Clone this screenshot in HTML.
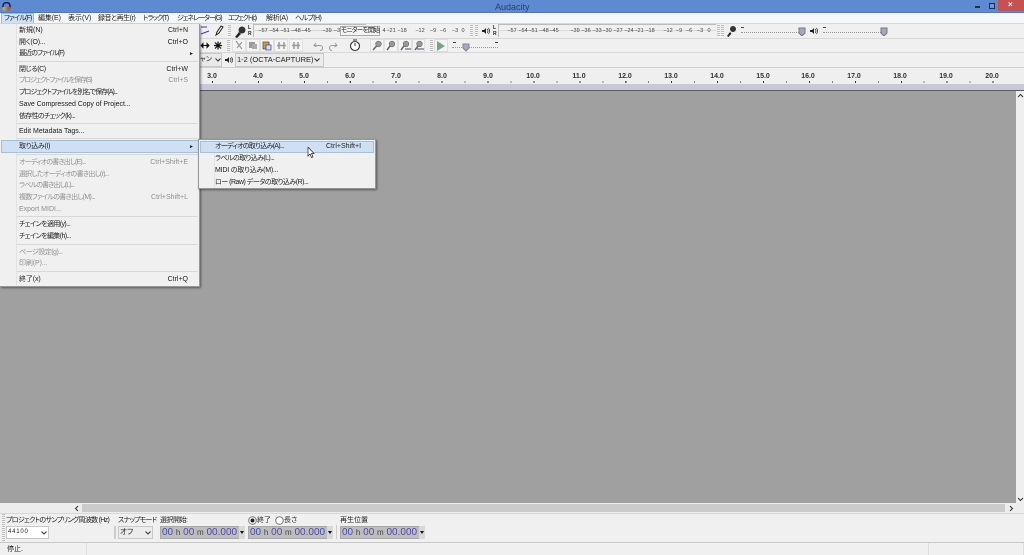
<!DOCTYPE html>
<html><head><meta charset="utf-8"><style>
html,body{margin:0;padding:0;width:1024px;height:555px;overflow:hidden;background:#f0f0f0}
body{position:relative;font-family:"Liberation Sans","Noto Sans CJK JP",sans-serif;font-size:7px;color:#222;line-height:10px;font-feature-settings:"palt"}
div,span.a,svg{position:absolute}
.t{position:absolute;white-space:nowrap;line-height:10px;height:10px}
.d{color:#8f8f8f}
.m{top:14px;font-size:7px}
.s{position:absolute;right:11px;white-space:nowrap}
.mn .t,.mn .s{margin-top:1px}
.sep{position:absolute;left:17px;width:181px;height:1px;background:#d8d8d8}
.rl{position:absolute;top:72px;font-size:7px;font-weight:bold;color:#333;width:30px;text-align:center}
.mt{position:absolute;font-size:5.5px;color:#444;white-space:nowrap;line-height:8px;top:27px;width:12px;text-align:center}
.line{background:#d8d8d8}
.tc{background:#bdbdbd;border:1px solid #a8a8a8;box-sizing:border-box;color:#4a4ab8;font-size:10px;line-height:11px;white-space:nowrap;height:13px;overflow:hidden}
.tc i{font-style:normal;color:#444;font-size:8px}
.grip{width:3px;background:repeating-linear-gradient(#bbb 0 1px,#f5f5f5 1px 2px)}
</style></head><body>
<!-- title -->
<div style="left:0;top:0;width:1024px;height:12px;background:#5e8ad2"></div>
<div style="left:0;top:12px;width:1024px;height:1px;background:#4d7ac6"></div>
<svg style="left:2px;top:2px" width="9" height="9" viewBox="0 0 9 9"><path d="M1 6V4a3.500 3.500 0 0 1 7 0v2" fill="none" stroke="#1a1a50" stroke-width="1.500"/><rect x="0.500" y="5" width="3" height="3.500" fill="#e8a010"/><rect x="5.500" y="5" width="3" height="3.500" fill="#e05010"/></svg>
<div class="t" style="left:495px;top:2px;font-size:9px;color:#2a4270">Audacity</div>
<div style="left:975px;top:6px;width:5px;height:1.500px;background:#1f2f4f"></div>
<div style="left:989px;top:3px;width:4px;height:4px;border:1px solid #1f2f4f;box-sizing:content-box;background:#6f95d6"></div>
<div style="left:998px;top:0;width:26px;height:11px;background:#c75050"></div>
<div class="t" style="left:1008px;top:0px;color:#fff;font-size:8px;font-weight:bold">×</div>
<!-- menu bar -->
<div style="left:0;top:13px;width:1024px;height:11px;background:#f5f6f7"></div>
<div style="left:1px;top:13px;width:33px;height:11px;background:#cde3f7;border:1px solid #8fbfe8;box-sizing:border-box"></div>
<div class="t m" style="left:4px;letter-spacing:-.8px">ファイル(F)</div>
<div class="t m" style="left:38px;letter-spacing:-.1px">編集(E)</div>
<div class="t m" style="left:68px">表示(V)</div>
<div class="t m" style="left:98px;letter-spacing:-.5px">録音と再生(r)</div>
<div class="t m" style="left:143px;letter-spacing:-1px">トラック(T)</div>
<div class="t m" style="left:177px;letter-spacing:-1.1px">ジェネレーター(G)</div>
<div class="t m" style="left:228px;letter-spacing:-1.3px">エフェクト(c)</div>
<div class="t m" style="left:266px;letter-spacing:-.3px">解析(A)</div>
<div class="t m" style="left:295px;letter-spacing:-.6px">ヘルプ(H)</div>
<!-- toolbars -->
<div style="left:0;top:24px;width:1024px;height:44px;background:#f0f0f0"></div>
<div class="line" style="left:0;top:23px;width:1024px;height:1px"></div>
<div class="line" style="left:0;top:38px;width:1024px;height:1px"></div>
<div class="line" style="left:0;top:52px;width:1024px;height:1px"></div>
<div style="left:0;top:67px;width:1024px;height:1px;background:#cfcfcf"></div>
<!-- tools -->
<svg style="left:200px;top:24px" width="30" height="14" viewBox="0 0 30 14"><path d="M1 3h6M1 10l8-3" stroke="#3a3ac0" fill="none"/><path d="M16 11l1-3 4-6 2 1-4 6z" fill="none" stroke="#222"/></svg>
<svg style="left:200px;top:39px" width="26" height="13" viewBox="0 0 26 13"><path d="M1 6.500h8M1 6.500l2-2v4zM9 6.500l-2-2v4z" stroke="#111" fill="#111"/><path d="M18 2.500v8M14 6.500h8M15 3.500l6 6M21 3.500l-6 6" stroke="#111" stroke-width="1.200"/></svg>
<div class="grip" style="left:228px;top:25px;height:12px"></div>
<svg style="left:234px;top:25px" width="14" height="13" viewBox="0 0 14 13"><path d="M1 12l4-5 2 2-4 4z" fill="#222"/><circle cx="8" cy="5" r="3.500" fill="#333"/></svg>
<div class="t" style="left:248px;top:25px;font-size:5px;font-weight:bold;line-height:6px">L<br>R</div>
<!-- rec meter -->
<div style="left:253px;top:24px;width:113px;height:1px;background:#bbb"></div>
<div style="left:253px;top:24px;width:1px;height:13px;background:#bbb"></div>
<div style="left:253px;top:30px;width:86px;height:1px;background:#d4d4d4"></div>
<div class="mt" style="left:257px">−57</div><div class="mt" style="left:268px">−54</div><div class="mt" style="left:279px">−51</div><div class="mt" style="left:290px">−48</div><div class="mt" style="left:300px">−45</div><div class="mt" style="left:321px">−39</div><div class="mt" style="left:331px">−3</div>
<div style="left:340px;top:26px;width:40px;height:10px;background:#f4f4f4;border:1px solid #aaa;box-sizing:border-box"></div>
<div class="t" style="left:341px;top:26px;font-size:6.500px;letter-spacing:-.7px">モニターを開始</div>
<div class="mt" style="left:378px">4</div><div class="mt" style="left:385px">−21</div><div class="mt" style="left:396px">−18</div><div class="mt" style="left:414px">−12</div><div class="mt" style="left:427px">−9</div><div class="mt" style="left:437px">−6</div><div class="mt" style="left:449px">−3</div><div class="mt" style="left:457px">0</div>
<div class="grip" style="left:470px;top:25px;height:12px"></div>
<div class="grip" style="left:475px;top:25px;height:12px"></div>
<svg style="left:482px;top:27px" width="8" height="8" viewBox="0 0 8 8"><path d="M0 3h2l2-2v6L2 5H0z" fill="#222"/><path d="M5 2q2 2 0 4M6.500 1q2 3 0 6" fill="none" stroke="#222" stroke-width=".7"/></svg>
<div class="t" style="left:493px;top:25px;font-size:5px;font-weight:bold;line-height:6px">L<br>R</div>
<div style="left:498px;top:24px;width:218px;height:1px;background:#bbb"></div>
<div style="left:498px;top:24px;width:1px;height:13px;background:#bbb"></div>
<div style="left:498px;top:30px;width:218px;height:1px;background:#dadada"></div>
<div class="mt" style="left:506px">−57</div><div class="mt" style="left:517px">−54</div><div class="mt" style="left:527px">−51</div><div class="mt" style="left:538px">−48</div><div class="mt" style="left:548px">−45</div><div class="mt" style="left:569px">−39</div><div class="mt" style="left:580px">−36</div><div class="mt" style="left:591px">−33</div><div class="mt" style="left:601px">−30</div><div class="mt" style="left:612px">−27</div><div class="mt" style="left:623px">−24</div><div class="mt" style="left:633px">−21</div><div class="mt" style="left:644px">−18</div><div class="mt" style="left:662px">−12</div><div class="mt" style="left:673px">−9</div><div class="mt" style="left:683px">−6</div><div class="mt" style="left:694px">−3</div><div class="mt" style="left:703px">0</div>
<div class="grip" style="left:717px;top:25px;height:12px"></div>
<div class="grip" style="left:721px;top:25px;height:12px"></div>
<svg style="left:726px;top:25px" width="11" height="12" viewBox="0 0 11 12"><path d="M1 11l3-4 1.500 1.500-3 3.500z" fill="#222"/><circle cx="7" cy="4" r="3" fill="#333"/></svg>
<div style="left:741px;top:32px;width:60px;height:0;border-top:1px dotted #999"></div>
<div style="left:741px;top:27px;width:3px;height:1px;background:#444"></div>
<svg style="left:798px;top:25px" width="8" height="11" viewBox="0 0 8 11"><path d="M1 3h6v5l-3 3-3-3z" fill="#a4a8c0" stroke="#777"/></svg>
<svg style="left:810px;top:27px" width="8" height="8" viewBox="0 0 8 8"><path d="M0 3h2l2-2v6L2 5H0z" fill="#222"/><path d="M5 2q2 2 0 4M6.500 1q2 3 0 6" fill="none" stroke="#222" stroke-width=".7"/></svg>
<div style="left:823px;top:32px;width:60px;height:0;border-top:1px dotted #999"></div>
<div style="left:823px;top:27px;width:3px;height:1px;background:#444"></div>
<svg style="left:880px;top:25px" width="8" height="11" viewBox="0 0 8 11"><path d="M1 3h6v5l-3 3-3-3z" fill="#a4a8c0" stroke="#777"/></svg>
<!-- edit toolbar row -->
<div class="grip" style="left:227px;top:40px;height:11px"></div>
<svg style="left:232px;top:39px" width="112" height="13" viewBox="0 0 112 13"><g fill="#f4f4f4" stroke="#e0e0e0"><rect x=".5" y=".5" width="13" height="12"/><rect x="14.500" y=".5" width="13" height="12"/><rect x="28.500" y=".5" width="13" height="12"/><rect x="42.500" y=".5" width="13" height="12"/><rect x="57.500" y=".5" width="13" height="12"/></g><path d="M4 2l6 8M10 3L5 9" stroke="#999" stroke-width="1.200"/><rect x="17" y="3" width="6" height="6" fill="#999"/><rect x="20" y="5" width="5" height="5" fill="#aaa"/><rect x="31" y="3" width="6" height="7" fill="#c9a23c" stroke="#444" stroke-width=".7"/><rect x="34" y="6" width="5" height="5" fill="#dde" stroke="#33a" stroke-width=".7"/><path d="M45 6.500h9M47 3v7M52 3v7" stroke="#999" stroke-width="1.500"/><path d="M60 6.500h8M62 3v7M66 3v7" stroke="#999" stroke-width="1.500"/></svg>
<svg style="left:312px;top:40px" width="28" height="12" viewBox="0 0 28 12"><path d="M4 3L2 5.500 4.500 7M2 5.500h6a2.500 2.500 0 0 1 0 5" fill="none" stroke="#999"/><path d="M23 3l2 2.500L22.500 7M25 5.500h-5a2.500 2.500 0 0 0 0 5" fill="none" stroke="#999"/></svg>
<svg style="left:348px;top:39px" width="14" height="13" viewBox="0 0 14 13"><circle cx="7" cy="7" r="4.500" fill="#fff" stroke="#333" stroke-width="1.100"/><path d="M7 7V4M5 1h4" stroke="#333"/></svg>
<svg style="left:370px;top:39px" width="56" height="13" viewBox="0 0 56 13"><g fill="#f4f4f4" stroke="#e0e0e0"><rect x=".5" y=".5" width="13" height="12"/><rect x="14.500" y=".5" width="13" height="12"/><rect x="28.500" y=".5" width="13" height="12"/><rect x="42.500" y=".5" width="12" height="12"/></g><g fill="#999" stroke="#666" stroke-width=".6"><circle cx="8.500" cy="5" r="2.800"/><circle cx="22" cy="5" r="2.800"/><circle cx="36" cy="5" r="2.800"/><circle cx="49.500" cy="5" r="2.800"/></g><path d="M3 11l3.500-4M17 11l3-4M31 11l3-4M45 11l3-4" stroke="#666" stroke-width="1.500"/><path d="M35 10h6M47 10h7" stroke="#446"/></svg>
<div class="grip" style="left:430px;top:40px;height:11px"></div>
<div style="left:434px;top:39px;width:14px;height:13px;background:#f4f4f4;border:1px solid #dcdcdc;box-sizing:border-box"></div>
<svg style="left:436px;top:41px" width="10" height="10" viewBox="0 0 10 10"><path d="M1 0l8 5-8 5z" fill="#76a67c"/></svg>
<div style="left:453px;top:42px;width:3px;height:1px;background:#444"></div>
<div style="left:495px;top:42px;width:3px;height:1px;background:#444"></div>
<div style="left:452px;top:47px;width:46px;height:0;border-top:1px dotted #999"></div>
<svg style="left:462px;top:42px" width="8" height="10" viewBox="0 0 8 10"><path d="M1 2h6v4l-3 3-3-3z" fill="#a4a8c0" stroke="#888"/></svg>
<!-- device row -->
<div style="left:200px;top:53px;width:22px;height:14px;background:#e9e9e9;border:1px solid #c8c8c8;border-left:0;box-sizing:border-box"></div>
<div class="t" style="left:200px;top:55px;font-size:7px;color:#333">ャン</div>
<svg style="left:215px;top:58px" width="6" height="4" viewBox="0 0 6 4"><path d="M.5.500L3 3 5.500.5" fill="none" stroke="#333"/></svg>
<svg style="left:225px;top:56px" width="8" height="8" viewBox="0 0 8 8"><path d="M0 3h2l2-2v6L2 5H0z" fill="#222"/><path d="M5 2q2 2 0 4M6.500 1q2 3 0 6" fill="none" stroke="#222" stroke-width=".7"/></svg>
<div style="left:235px;top:53px;width:89px;height:14px;background:#ebebeb;border:1px solid #c8c8c8;box-sizing:border-box"></div>
<div class="t" style="left:237px;top:55px;font-size:7.500px">1-2 (OCTA-CAPTURE)</div>
<svg style="left:314px;top:58px" width="6" height="4" viewBox="0 0 6 4"><path d="M.5.500L3 3 5.500.5" fill="none" stroke="#333"/></svg>
<!-- ruler -->
<div style="left:0;top:68px;width:1024px;height:16px;background:#efefef"></div>
<div class="rl" style="left:197px">3.0</div><div class="rl" style="left:243px">4.0</div><div class="rl" style="left:289px">5.0</div><div class="rl" style="left:335px">6.0</div><div class="rl" style="left:381px">7.0</div><div class="rl" style="left:427px">8.0</div><div class="rl" style="left:473px">9.0</div><div class="rl" style="left:518px">10.0</div><div class="rl" style="left:564px">11.0</div><div class="rl" style="left:610px">12.0</div><div class="rl" style="left:656px">13.0</div><div class="rl" style="left:702px">14.0</div><div class="rl" style="left:748px">15.0</div><div class="rl" style="left:793px">16.0</div><div class="rl" style="left:839px">17.0</div><div class="rl" style="left:885px">18.0</div><div class="rl" style="left:931px">19.0</div><div class="rl" style="left:977px">20.0</div>
<div style="left:189px;top:81px;width:824px;height:2px;background:repeating-linear-gradient(90deg,#888 0 1px,transparent 1px 22.96px)"></div>
<div style="left:212px;top:81px;width:790px;height:2px;background:repeating-linear-gradient(90deg,#333 0 1px,transparent 1px 45.92px)"></div>
<div style="left:0;top:84px;width:1024px;height:6px;background:#c8c8d8"></div>
<div style="left:0;top:90px;width:1024px;height:1px;background:#5c5c5c"></div>
<!-- track area -->
<div style="left:0;top:91px;width:1024px;height:412px;background:#a0a0a0"></div>
<!-- v scrollbar -->
<div style="left:1016px;top:91px;width:8px;height:412px;background:#efefef"></div>
<svg style="left:1017px;top:93px" width="7" height="5" viewBox="0 0 7 5"><path d="M1 4l2.500-2.500L6 4" fill="none" stroke="#333"/></svg>
<svg style="left:1017px;top:497px" width="7" height="5" viewBox="0 0 7 5"><path d="M1 1l2.500 2.500L6 1" fill="none" stroke="#333"/></svg>
<!-- h scrollbar -->
<div style="left:0;top:503px;width:1024px;height:10px;background:#ededed"></div>
<div style="left:82px;top:504px;width:923px;height:8px;background:#cbcbcb"></div>
<svg style="left:74px;top:505px" width="6" height="7" viewBox="0 0 6 7"><path d="M4 1L1.500 3.500 4 6" fill="none" stroke="#333"/></svg>
<svg style="left:1008px;top:505px" width="6" height="7" viewBox="0 0 6 7"><path d="M2 1l2.500 2.500L2 6" fill="none" stroke="#333"/></svg>
<!-- selection bar -->
<div style="left:0;top:513px;width:1024px;height:1px;background:#d8d8d8"></div>
<div class="grip" style="left:2px;top:514px;height:27px"></div>
<div class="t" style="left:6px;top:516px;font-size:7px;letter-spacing:-.7px">プロジェクトのサンプリング周波数 (Hz)</div>
<div style="left:6px;top:526px;width:43px;height:13px;background:#fff;border:1px solid #c8c8c8;box-sizing:border-box"></div>
<div class="t" style="left:8px;top:527px;font-size:6px;letter-spacing:.8px">44100</div>
<svg style="left:41px;top:531px" width="6" height="4" viewBox="0 0 6 4"><path d="M.5.500L3 3 5.500.5" fill="none" stroke="#333"/></svg>
<div style="left:114px;top:526px;width:2px;height:13px;background:#ccc"></div>
<div class="t" style="left:118px;top:516px;font-size:7px;letter-spacing:-.8px">スナップモード</div>
<div style="left:118px;top:526px;width:35px;height:13px;background:#ececec;border:1px solid #c8c8c8;box-sizing:border-box"></div>
<div class="t" style="left:120px;top:527px;font-size:7.500px">オフ</div>
<svg style="left:145px;top:531px" width="6" height="4" viewBox="0 0 6 4"><path d="M.5.500L3 3 5.500.5" fill="none" stroke="#333"/></svg>
<div class="t" style="left:160px;top:516px;font-size:7px;letter-spacing:-.5px">選択開始:</div>
<div class="tc" style="left:160px;top:526px;width:85px;padding-left:1px">00 <i>h</i> 00 <i>m</i> 00.000 <i>s</i></div>
<svg style="left:239px;top:526px" width="6" height="13" viewBox="0 0 6 13"><rect width="6" height="13" fill="#d8d8d8"/><path d="M1 5h4L3 8z" fill="#111"/></svg>
<svg style="left:248px;top:516px" width="9" height="9" viewBox="0 0 9 9"><circle cx="4.500" cy="4.500" r="3.800" fill="#fff" stroke="#777"/><circle cx="4.500" cy="4.500" r="2" fill="#222"/></svg>
<div class="t" style="left:257px;top:516px;font-size:7px">終了</div>
<svg style="left:275px;top:516px" width="9" height="9" viewBox="0 0 9 9"><circle cx="4.500" cy="4.500" r="3.800" fill="#fff" stroke="#777"/></svg>
<div class="t" style="left:284px;top:516px;font-size:7px">長さ</div>
<div class="tc" style="left:248px;top:526px;width:85px;padding-left:1px">00 <i>h</i> 00 <i>m</i> 00.000 <i>s</i></div>
<svg style="left:327px;top:526px" width="6" height="13" viewBox="0 0 6 13"><rect width="6" height="13" fill="#d8d8d8"/><path d="M1 5h4L3 8z" fill="#111"/></svg>
<div style="left:336px;top:525px;width:1px;height:14px;background:#ccc"></div>
<div class="t" style="left:340px;top:516px;font-size:7px">再生位置</div>
<div class="tc" style="left:340px;top:526px;width:85px;padding-left:1px">00 <i>h</i> 00 <i>m</i> 00.000 <i>s</i></div>
<svg style="left:419px;top:526px" width="6" height="13" viewBox="0 0 6 13"><rect width="6" height="13" fill="#d8d8d8"/><path d="M1 5h4L3 8z" fill="#111"/></svg>
<!-- status -->
<div style="left:0;top:542px;width:1024px;height:1px;background:#c8c8c8"></div>
<div class="t" style="left:7px;top:545px;font-size:7px">停止.</div>
<div style="left:86px;top:543px;width:1px;height:12px;background:#dedede"></div>
<div style="left:928px;top:543px;width:1px;height:12px;background:#dedede"></div>
<div style="left:1023px;top:543px;width:1px;height:12px;background:#dedede"></div>
<!-- file menu -->
<div class="mn" style="left:0;top:24px;width:200px;height:263px;background:#f0f0f0;border:1px solid #979797;border-top:0;border-left:0;box-sizing:border-box;box-shadow:1px 1px 2px rgba(0,0,0,.45)">
<div style="left:16px;top:0;width:1px;height:262px;background:#e2e2e2"></div>
<div class="t" style="left:19px;top:1px">新規(N)</div><div class="s" style="top:1px">Ctrl+N</div>
<div class="t" style="left:19px;top:13px;letter-spacing:-.2px">開く(O)...</div><div class="s" style="top:13px">Ctrl+O</div>
<div class="t" style="left:19px;top:24px;letter-spacing:-.9px">最近のファイル(F)</div><div class="s" style="top:24px;right:5px;font-size:5px">►</div>
<div class="sep" style="top:37px"></div>
<div class="t" style="left:19px;top:40px;letter-spacing:-.4px">閉じる(C)</div><div class="s" style="top:40px">Ctrl+W</div>
<div class="t d" style="left:19px;top:51px;letter-spacing:-1.2px">プロジェクトファイルを保存(S)</div><div class="s d" style="top:51px">Ctrl+S</div>
<div class="t" style="left:19px;top:63px;letter-spacing:-.9px">プロジェクトファイルを別名で保存(A)...</div>
<div class="t" style="left:19px;top:75px;letter-spacing:-.05px">Save Compressed Copy of Project...</div>
<div class="t" style="left:19px;top:87px;letter-spacing:-.7px">依存性のチェック(k)...</div>
<div class="sep" style="top:99px"></div>
<div class="t" style="left:19px;top:102px">Edit Metadata Tags...</div>
<div class="sep" style="top:114px"></div>
<div style="left:1px;top:116px;width:198px;height:13px;background:#cfe0f2;border:1px solid #9cc2e8;box-sizing:border-box"></div>
<div class="t" style="left:19px;top:117px;letter-spacing:-.3px">取り込み(I)</div><div class="s" style="top:117px;right:5px;font-size:5px">►</div>
<div class="sep" style="top:130px"></div>
<div class="t d" style="left:19px;top:133px;letter-spacing:-.8px">オーディオの書き出し(E)...</div><div class="s d" style="top:133px">Ctrl+Shift+E</div>
<div class="t d" style="left:19px;top:145px;letter-spacing:-.7px">選択したオーディオの書き出し(r)...</div>
<div class="t d" style="left:19px;top:156px;letter-spacing:-.85px">ラベルの書き出し(L)...</div>
<div class="t d" style="left:19px;top:168px;letter-spacing:-.67px">複数ファイルの書き出し(M)...</div><div class="s d" style="top:168px">Ctrl+Shift+L</div>
<div class="t d" style="left:19px;top:180px">Export MIDI...</div>
<div class="sep" style="top:192px"></div>
<div class="t" style="left:19px;top:195px;letter-spacing:-.6px">チェインを適用(y)...</div>
<div class="t" style="left:19px;top:207px;letter-spacing:-.6px">チェインを編集(h)...</div>
<div class="sep" style="top:220px"></div>
<div class="t d" style="left:19px;top:223px;letter-spacing:-.5px">ページ設定(g)...</div>
<div class="t d" style="left:19px;top:234px;letter-spacing:-.1px">印刷(P)...</div>
<div class="sep" style="top:247px"></div>
<div class="t" style="left:19px;top:250px;letter-spacing:-.1px">終了(x)</div><div class="s" style="top:250px">Ctrl+Q</div>
</div>
<!-- submenu -->
<div class="mn" style="left:198px;top:139px;width:178px;height:50px;background:#f0f0f0;border:1px solid #979797;box-sizing:border-box;box-shadow:1px 1px 2px rgba(0,0,0,.45)">
<div style="left:15px;top:0;width:1px;height:48px;background:#e2e2e2"></div>
<div style="left:1px;top:1px;width:174px;height:12px;background:#cfe0f2;border:1px solid #9cc2e8;box-sizing:border-box"></div>
<div class="t" style="left:16px;top:1px;letter-spacing:-.7px">オーディオの取り込み(A)...</div>
<div class="t" style="left:127px;top:1px">Ctrl+Shift+I</div>
<div class="t" style="left:16px;top:13px;letter-spacing:-.6px">ラベルの取り込み(L)...</div>
<div class="t" style="left:16px;top:25px;letter-spacing:-.2px">MIDI の取り込み(M)...</div>
<div class="t" style="left:16px;top:37px;letter-spacing:-.5px">ロー (Raw) データの取り込み(R)...</div>
</div>
<svg style="left:307px;top:147px" width="8" height="12" viewBox="0 0 8 12"><path d="M1 0v9l2-2 1.500 3.500 1.500-.7L4.500 6.500H7z" fill="#fff" stroke="#222" stroke-width=".7"/></svg>
</body></html>
